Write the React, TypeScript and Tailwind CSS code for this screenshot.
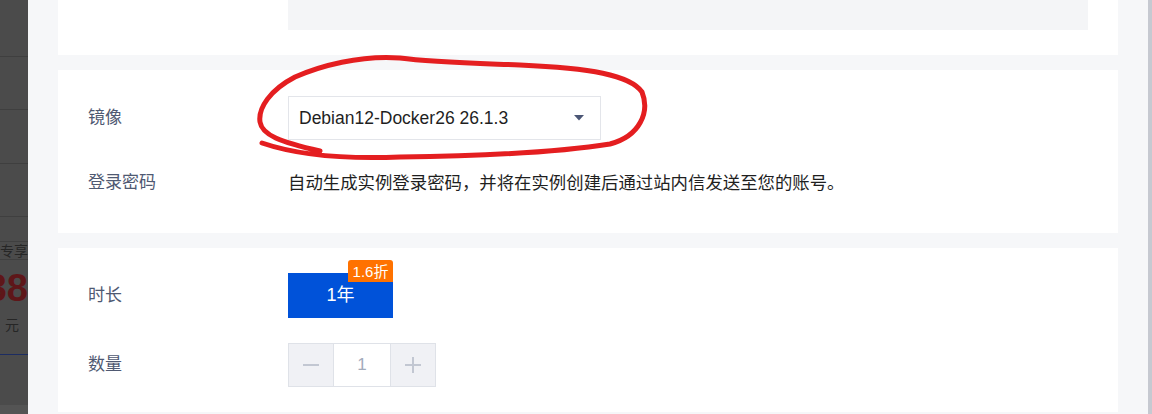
export default function App() {
  const font = { fontFamily: '"Liberation Sans", "Noto Sans CJK SC", sans-serif' };

  return (
    <div style={font} className="relative flex h-[414px] w-[1152px] overflow-hidden bg-[#f6f7f9]">
      {/* Dimmed side panel */}
      <div className="flex w-[28px] shrink-0 flex-col overflow-hidden bg-[#4b4b4b]">
        <div className="h-[57px] shrink-0 border-b border-[#3f3f3f]" />
        <div className="h-[53px] shrink-0 border-b border-[#3f3f3f]" />
        <div className="h-[54px] shrink-0 border-b border-[#3f3f3f]" />
        <div className="h-[53px] shrink-0 border-b border-[#3f3f3f]" />
        <div className="mt-[24px] flex h-[19px] shrink-0 items-center justify-end border-y border-[#3f3f3f] text-[14px] leading-none whitespace-nowrap text-[#262626]">
          专享
        </div>
        <div className="mt-[8px] flex h-[40px] shrink-0 items-center justify-end text-[38px] leading-none font-bold whitespace-nowrap text-[#5e1619]">
          38
        </div>
        <div className="mt-[10px] pl-[5px] text-[14px] leading-none text-[#262626]">元</div>
        <div className="mt-[22px] h-px shrink-0 bg-[#1c2c62]" />
        <div className="flex-1" />
        <div className="h-[9px] shrink-0 bg-[#545454]" />
      </div>

      {/* Main area */}
      <div className="flex flex-1 flex-col gap-[15px] px-[30px]">
        <div className="h-[55px] shrink-0 bg-white pr-[30px] pl-[230px]">
          <div className="h-[30px] bg-[#f4f5f7]" />
        </div>

        <div className="relative flex h-[163px] shrink-0 flex-col bg-white px-[30px] pt-[26px]">
          <div className="flex h-[44px] items-center">
            <div className="w-[200px] text-[17px] text-[#4f5972]">镜像</div>
            <div className="flex h-[44px] w-[313px] items-center justify-between border border-[#e3e5ea] pr-[16px] pl-[10px] text-[17.5px] text-[#1f1f1f]">
              <span>Debian12-Docker26 26.1.3</span>
              <svg width="10" height="6" viewBox="0 0 10 6">
                <path d="M0 0H10L5 5.5Z" fill="#4b5675" />
              </svg>
            </div>
          </div>
          <div className="mt-[31px] flex h-[24px] items-center">
            <div className="w-[200px] text-[17px] text-[#4f5972]">登录密码</div>
            <div className="text-[17.4px] text-[#1f1f1f]">
              自动生成实例登录密码，并将在实例创建后通过站内信发送至您的账号。
            </div>
          </div>
        </div>

        <div className="flex h-[164px] shrink-0 flex-col bg-white px-[30px] pt-[25px]">
          <div className="flex h-[45px] items-center">
            <div className="w-[200px] text-[17px] text-[#4f5972]">时长</div>
            <div className="relative flex h-[45px] w-[105px] items-center justify-center bg-[#0052d9] text-[18px] text-white">
              1年
              <span className="absolute top-[-13px] right-0 flex h-[22px] w-[45px] items-center justify-center rounded-t-[3px] bg-[#ff7200] text-[15px] leading-none text-white">
                1.6折
              </span>
            </div>
          </div>
          <div className="mt-[25px] flex h-[44px] items-center">
            <div className="w-[200px] text-[17px] text-[#4f5972]">数量</div>
            <div className="flex h-[44px] w-[148px] border border-[#dfe2e8]">
              <div className="flex w-[44px] items-center justify-center bg-[#f0f1f5]">
                <span className="h-[2px] w-[16px] bg-[#c2c7d2]" />
              </div>
              <div className="flex flex-1 items-center justify-center border-x border-[#dfe2e8] text-[17px] text-[#a3abbb]">
                1
              </div>
              <div className="flex w-[44px] items-center justify-center bg-[#f0f1f5]">
                <svg width="16" height="16" viewBox="0 0 16 16">
                  <path d="M8 0V16M0 8H16" stroke="#c2c7d2" strokeWidth="2" />
                </svg>
              </div>
            </div>
          </div>
        </div>
      </div>

      {/* Scrollbar */}
      <div className="w-[4px] shrink-0 bg-[#c6c9d1]" />

      {/* Hand-drawn annotation */}
      <svg className="pointer-events-none absolute top-0 left-0" width="1152" height="414" viewBox="0 0 1152 414">
        <path
          d="M262 143 C300 156 350 159 400 157 C480 156 560 152 610 144 C640 136 650 112 642 92 C630 75 590 68 520 65 C470 63 430 62 400 58 C360 55 320 66 295 77 C270 90 258 108 260 122 C262 135 280 142 320 151"
          fill="none"
          stroke="#e41e20"
          strokeWidth="5"
          strokeLinecap="round"
        />
      </svg>
    </div>
  );
}
